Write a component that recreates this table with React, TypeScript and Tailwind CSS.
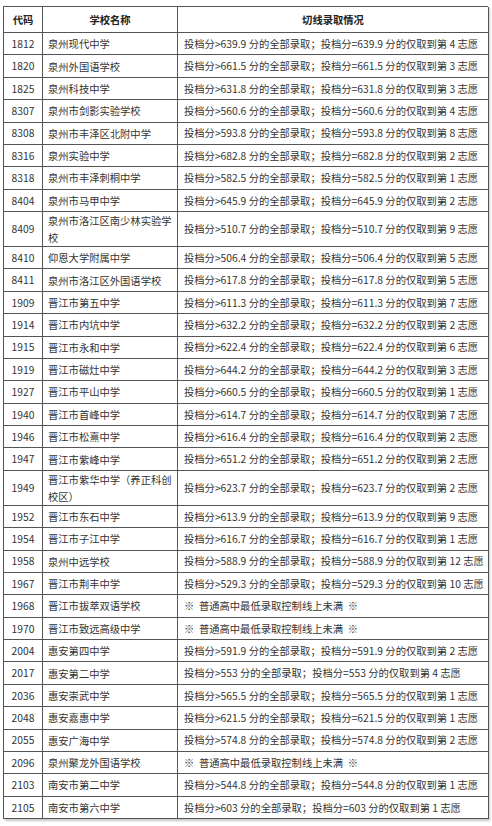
import React from 'react';

type Row = {
  code: string;
  name: string[];
  note: string;
};

// 普通录取行：投档分>X 分的全部录取；投档分=X 分的仅取到第 N 志愿
const cut = (score: string, wish: number) =>
  `投档分>${score} 分的全部录取；投档分=${score} 分的仅取到第 ${wish} 志愿`;

const NONE = '※  普通高中最低录取控制线上未满  ※';

const rows: Row[] = [
  { code: '1812', name: ['泉州现代中学'], note: cut('639.9', 4) },
  { code: '1820', name: ['泉州外国语学校'], note: cut('661.5', 3) },
  { code: '1825', name: ['泉州科技中学'], note: cut('631.8', 3) },
  { code: '8307', name: ['泉州市剑影实验学校'], note: cut('560.6', 4) },
  { code: '8308', name: ['泉州市丰泽区北附中学'], note: cut('593.8', 8) },
  { code: '8316', name: ['泉州实验中学'], note: cut('682.8', 2) },
  { code: '8318', name: ['泉州市丰泽刺桐中学'], note: cut('582.5', 1) },
  { code: '8404', name: ['泉州市马甲中学'], note: cut('645.9', 2) },
  { code: '8409', name: ['泉州市洛江区南少林实验学', '校'], note: cut('510.7', 9) },
  { code: '8410', name: ['仰恩大学附属中学'], note: cut('506.4', 5) },
  { code: '8411', name: ['泉州市洛江区外国语学校'], note: cut('617.8', 5) },
  { code: '1909', name: ['晋江市第五中学'], note: cut('611.3', 7) },
  { code: '1914', name: ['晋江市内坑中学'], note: cut('632.2', 2) },
  { code: '1915', name: ['晋江市永和中学'], note: cut('622.4', 6) },
  { code: '1919', name: ['晋江市磁灶中学'], note: cut('644.2', 3) },
  { code: '1927', name: ['晋江市平山中学'], note: cut('660.5', 1) },
  { code: '1940', name: ['晋江市首峰中学'], note: cut('614.7', 7) },
  { code: '1946', name: ['晋江市松熹中学'], note: cut('616.4', 2) },
  { code: '1947', name: ['晋江市紫峰中学'], note: cut('651.2', 2) },
  { code: '1949', name: ['晋江市紫华中学（养正科创', '校区）'], note: cut('623.7', 2) },
  { code: '1952', name: ['晋江市东石中学'], note: cut('613.9', 9) },
  { code: '1954', name: ['晋江市子江中学'], note: cut('616.7', 1) },
  { code: '1958', name: ['泉州中远学校'], note: cut('588.9', 12) },
  { code: '1967', name: ['晋江市荆丰中学'], note: cut('529.3', 10) },
  { code: '1968', name: ['晋江市拔萃双语学校'], note: NONE },
  { code: '1970', name: ['晋江市致远高级中学'], note: NONE },
  { code: '2004', name: ['惠安第四中学'], note: cut('591.9', 2) },
  { code: '2017', name: ['惠安第二中学'], note: cut('553', 4) },
  { code: '2036', name: ['惠安崇武中学'], note: cut('565.5', 1) },
  { code: '2048', name: ['惠安嘉惠中学'], note: cut('621.5', 1) },
  { code: '2055', name: ['惠安广海中学'], note: cut('574.8', 2) },
  { code: '2096', name: ['泉州聚龙外国语学校'], note: NONE },
  { code: '2103', name: ['南安市第二中学'], note: cut('544.8', 1) },
  { code: '2105', name: ['南安市第六中学'], note: cut('603', 1) },
];

const cell = 'border-r border-b border-[#555] flex items-center';

export default function App() {
  return (
    <div
      className="w-[492px] h-[826px] bg-white text-[#333] text-[10.3px] pt-[6px] pl-[3px]"
      style={{ fontFamily: '"Noto Sans CJK SC", "Noto Sans", sans-serif' }}
    >
      <div className="grid grid-cols-[39px_135px_311px] w-[485px] border-l border-t border-[#555] shadow-[2px_2px_2px_rgba(0,0,0,0.22)]">
        {/* Header */}
        <div className={`${cell} h-[26px] justify-center font-bold text-[#222]`}>代码</div>
        <div className={`${cell} h-[26px] justify-center font-bold text-[#222]`}>学校名称</div>
        <div className={`${cell} h-[26px] justify-center font-bold text-[#222]`}>切线录取情况</div>

        {rows.map((r) => {
          const tall = r.name.length > 1;
          const h = tall ? 'h-[35px]' : 'h-[22.375px]';
          return (
            <React.Fragment key={r.code}>
              <div className={`${cell} ${h} justify-center`}>{r.code}</div>
              <div className={`${cell} ${h} pl-[5px]`}>
                <div className="leading-[17px]">
                  {r.name.map((line, i) => (
                    <div key={i} className="whitespace-nowrap">
                      {line}
                    </div>
                  ))}
                </div>
              </div>
              <div className={`${cell} ${h} pl-[6px] whitespace-pre`}>{r.note}</div>
            </React.Fragment>
          );
        })}
      </div>
    </div>
  );
}
